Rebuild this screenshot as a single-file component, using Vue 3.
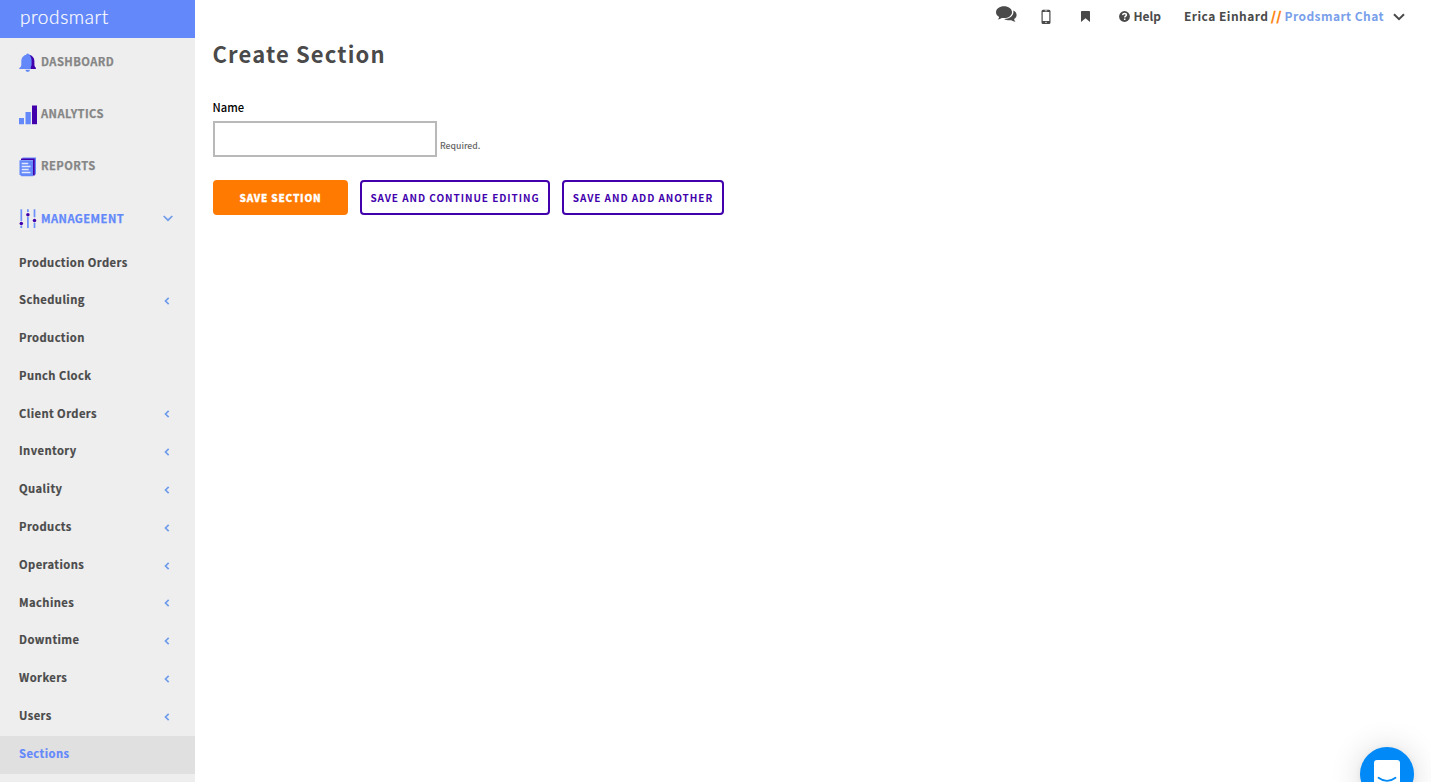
<script setup>
const items = [
  ['Production Orders', false], ['Scheduling', true], ['Production', false], ['Punch Clock', false],
  ['Client Orders', true], ['Inventory', true], ['Quality', true], ['Products', true],
  ['Operations', true], ['Machines', true], ['Downtime', true], ['Workers', true],
  ['Users', true], ['Sections', false],
].map(([label, sub]) => ({ label, sub }))
</script>

<template>
  <div class="page">
    <aside class="sidebar">
      <div class="brand"><span>prodsmart</span></div>
      <nav>
        <a class="main">
          <svg width="19" height="20" viewBox="0 0 19 20">
            <path d="M6.400 16.800a2.300 2.100 0 0 0 4.600 0z" fill="#6388fa" />
            <path d="M7.400 1.500A1.500 1.500 0 0 1 10.200 1.500C13.500 2.500 15 5 15 8v3.500c0 1.800.4 2.600 1.700 3.500v1H.3v-1c1.600-1 2-1.900 2-3.500V8c0-3 1.900-5.500 5.100-6.500z" fill="#6388fa" />
            <path d="M10.300 2C13.500 2.700 15.400 5 15.400 8v3.500c0 1.500.3 2.400 1.400 3.300v1.200h-5V14c.6-.8.800-1.500.8-2.500V8c0-2.500-.5-4.300-2.300-6z" fill="#4200ad" />
          </svg><span>DASHBOARD</span>
        </a>
        <a class="main">
          <svg width="19" height="20" viewBox="0 0 19 20">
            <path d="M0 13h5v6.200H0zM6.500 7h5.300v12.200H6.500z" fill="#6388fa" />
            <path d="M13 0.500h5V19.200h-5z" fill="#4200ad" />
          </svg><span>ANALYTICS</span>
        </a>
        <a class="main">
          <svg width="19" height="20" viewBox="0 0 19 20">
            <path d="M3.500 .4h13.500v17h-1.500V2h-12z" fill="#6388fa" />
            <path d="M2 1.500h13.800v17h-1.800V3.100H2z" fill="#4200ad" />
            <path d="M.5 3.300h13.500v16H2.500l-2-2z" fill="#6388fa" />
            <path d="M2.700 6.500h6.500M2.700 9.500h8.800M2.700 12.500h7M2.700 15.500h8.800" stroke="#e4e9fb" stroke-width="1.300" />
          </svg><span>REPORTS</span>
        </a>
        <a class="main open">
          <svg width="19" height="20" viewBox="0 0 19 20">
            <path d="M2.300.3v11.700M2.300 16.800v2.200M8.900 .3v2.700M8.900 8v11M15.500.3v8M15.500 13.800v5.200" stroke="#6c91fb" stroke-width="1.700" />
            <g fill="#4200ad"><circle cx="2.300" cy="14.500" r="1.750" /><circle cx="8.900" cy="5.800" r="1.750" /><circle cx="15.500" cy="11.400" r="1.750" /></g>
          </svg><span>MANAGEMENT</span>
          <svg class="down" width="10" height="7" viewBox="0 0 10 7"><path d="M.7 1L5 5.200 9.300 1" /></svg>
        </a>
        <a v-for="item in items" :key="item.label" class="sub" :class="{ active: item.label === 'Sections' }">
          <span>{{ item.label }}</span>
          <svg v-if="item.sub" class="left" width="6" height="8" viewBox="0 0 6 8"><path d="M4.700.8L1.500 4l3.200 3.200" /></svg>
        </a>
      </nav>
    </aside>

    <main>
      <header>
        <svg class="chat" width="22" height="18" viewBox="0 0 22 18">
          <path d="M8 .3c4.400 0 8 2.600 8 5.900s-3.600 5.900-8 5.900c-.8 0-1.500-.1-2.200-.2-1.200.9-2.500 1.400-4 1.500.8-.7 1.300-1.500 1.400-2.500C1.200 9.800 0 8.100 0 6.200 0 2.900 3.600.3 8 .3z" />
          <path d="M17.300 4.500c2 .9 3.300 2.500 3.300 4.400 0 1.700-.9 3.200-2.500 4.200.1 1 .6 1.800 1.400 2.600-1.700-.1-3.100-.6-4.200-1.500-2.500.4-5.200 0-7.100-1.300 5.200-.1 9.200-3 9.200-6.700 0-.6 0-1.100-.1-1.700z" />
        </svg>
        <svg class="phone" width="10" height="16" viewBox="0 0 10 16">
          <path fill-rule="evenodd" d="M2 .8h6a1.500 1.500 0 0 1 1.500 1.500v11.200A1.500 1.500 0 0 1 8 15H2a1.500 1.500 0 0 1-1.500-1.500V2.300A1.500 1.500 0 0 1 2 .8zM1.700 3v8.900h6.600V3zM3.800 1.600v.6h2.400v-.6zM5 12.700a.7.700 0 1 0 0 1.400.7.700 0 0 0 0-1.400z" />
        </svg>
        <svg class="mark" width="9" height="11" viewBox="0 0 9 11"><path d="M.8 0h7.400q.8 0 .8.800V11L4.500 7.200 0 11V.8Q0 0 .8 0z" /></svg>
        <svg class="question" width="11" height="11" viewBox="0 0 11 11">
          <circle cx="5.500" cy="5.500" r="5.400" />
          <path d="M3.600 4.100c.2-1.100.9-1.600 1.900-1.600 1.100 0 1.900.6 1.900 1.500 0 1.200-1.700 1.200-1.700 2.500M5.700 7.400v1.500" fill="none" stroke="#fff" stroke-width="1.500" />
        </svg>
        <span class="help">Help</span>
        <span class="user">Erica Einhard</span><span class="slashes">//</span><span class="company">Prodsmart Chat</span>
        <svg class="caret" width="12" height="8" viewBox="0 0 12 8"><path d="M1 1.200l5 5 5-5" fill="none" stroke="#4a4a4a" stroke-width="2" /></svg>
      </header>
      <h1><span>Create Section</span></h1>
      <form @submit.prevent>
        <label for="name"><span>Name</span></label>
        <div class="field"><input id="name" type="text"><small>Required.</small></div>
        <div class="actions">
          <button class="primary"><span>SAVE SECTION</span></button>
          <button class="continue"><span>SAVE AND CONTINUE EDITING</span></button>
          <button class="another"><span>SAVE AND ADD ANOTHER</span></button>
        </div>
      </form>
    </main>

    <div class="messenger">
      <svg width="26" height="30" viewBox="0 0 26 30">
        <path d="M3 0h20a3 3 0 0 1 3 3v27l-6-3H3a3 3 0 0 1-3-3V3a3 3 0 0 1 3-3z" fill="#fff" />
        <path d="M4.500 17.800c5 4 12 4 17 0" fill="none" stroke="#0089f7" stroke-width="1.800" stroke-linecap="round" />
      </svg>
    </div>
  </div>
</template>

<style>
html, body { margin: 0; background: #fff; overflow: hidden; }
</style>

<style scoped>
* { box-sizing: border-box; }
.page { width: 1431px; height: 782px; display: flex; overflow: hidden; position: relative; font-family: "Noto Sans CJK SC", "Open Sans", sans-serif; font-size: 11.200px; color: #4a4a4a; }
.sidebar { width: 195px; height: 782px; background: #eee; flex: none; }
.brand { height: 38px; background: #6388fa; color: #fff; padding-left: 20px; font: 300 19px/33px Lato, sans-serif; letter-spacing: .6px; -webkit-text-stroke: .2px #fff; }
.main { display: flex; align-items: center; height: 48px; margin-bottom: 4.200px; padding: 0 0 3px 19px; font-weight: 700; color: #858585; letter-spacing: .43px; -webkit-text-stroke: .25px currentColor; }
.main > svg:first-child { margin-right: 3px; position: relative; top: 2.500px; }
.open { color: #6388fa; margin-bottom: 1.800px; padding: 0 22px 1px 19px; }
.open > svg:first-child { top: .5px; }
.down { margin-left: auto; }
.down path, .left path { fill: none; stroke: #6f9cea; stroke-width: 1.700; }
.sub { display: flex; align-items: center; height: 37.800px; padding: 0 25px 3.500px 19px; font-weight: 700; letter-spacing: .42px; justify-content: space-between; -webkit-text-stroke: .2px currentColor; }
.left { position: relative; top: 1.800px; }
.active { background: #e0e0e0; color: #6388fa; }
main { flex: 1; }
header { height: 34px; display: flex; align-items: center; padding: 0 26px 1px 801px; font-size: 12px; font-weight: 700; white-space: nowrap; fill: #4a4a4a; }
header svg { flex: none; }
header span { margin-top: -2px; }
.chat { margin-top: -3px; }
.phone { margin-left: 23px; }
.mark { margin-left: 30px; }
.question { margin-left: 29px; }
.help { margin-left: 3.500px; width: 28px; }
.user { margin-left: 22.500px; letter-spacing: .45px; width: 83.500px; }
.slashes { color: #ff7a00; margin-left: 3.500px; width: 13.500px; font-size: 12.500px; letter-spacing: .6px; -webkit-text-stroke: .4px #ff7a00; }
.company { color: #7a9fea; letter-spacing: .43px; }
.caret { margin-left: auto; }
h1 { margin: -1px 0 0 17.500px; font-size: 22px; line-height: 40px; letter-spacing: 1.150px; }
form { padding-left: 18px; }
label { display: block; margin-top: 24px; line-height: 20px; color: #000; letter-spacing: .05px; font-weight: 500; margin-left: -.5px; }
.field { display: flex; margin-top: 4px; height: 36px; }
input { width: 224px; height: 36px; border: 2px solid #b9b9b9; border-radius: 0; background: #fff; padding: 0 8px; outline: 0; }
small { margin-left: 3px; font-size: 8.700px; line-height: 14px; margin-top: 18px; color: #666; font-weight: 500; }
.actions { display: flex; gap: 12px; margin-top: 23px; }
button { height: 35px; border: 2px solid #4200ad; border-radius: 4px; color: #4200ad; background: #fff; font: 700 10px "Noto Sans CJK SC", sans-serif; letter-spacing: .95px; padding: 0; white-space: nowrap; }
.primary { width: 135px; border-color: #ff7a00; background: #ff7a00; color: #fff; font-weight: 900; letter-spacing: .8px; -webkit-text-stroke: .3px #fff; }
.continue { width: 190px; }
.another { width: 162px; }
.messenger { position: absolute; left: 1360px; top: 747px; width: 54px; height: 54px; border-radius: 50%; background: #0089f7; box-shadow: 0 1px 6px rgba(0,0,0,.06), 0 2px 32px rgba(0,0,0,.16); display: flex; justify-content: center; padding-top: 13px; }
</style>
